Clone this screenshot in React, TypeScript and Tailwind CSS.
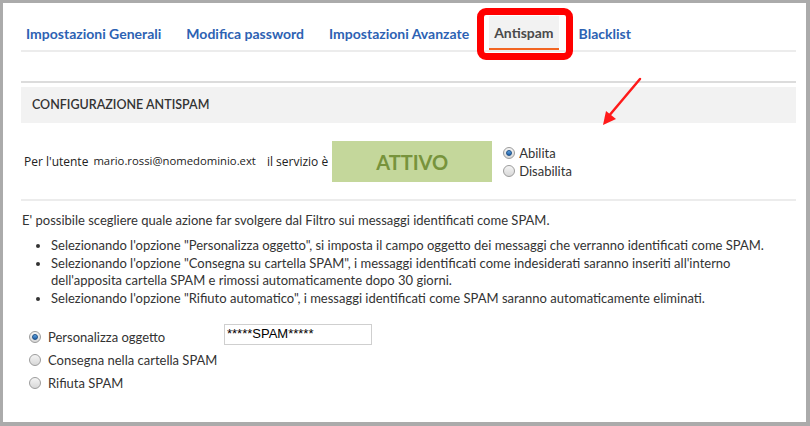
import React from "react"

const tabs = ["Impostazioni Generali", "Modifica password", "Impostazioni Avanzate", "Antispam", "Blacklist"]

function Radio({ checked }: { checked?: boolean }) {
  return (
    <span className="relative inline-flex h-[12px] w-[12px] shrink-0 items-center justify-center rounded-full border border-[#9c9c9c] bg-gradient-to-b from-[#f4f4f4] to-[#d8d8d8]">
      {checked && (
        <span className="h-[6px] w-[6px] rounded-full border border-[#1c4f86] bg-gradient-to-b from-[#5fa3e0] to-[#1e5fa8]" />
      )}
    </span>
  )
}

export default function App() {
  return (
    <div className="relative box-border h-[426px] w-[810px] border-t-[3px] border-l-[3px] border-r-[4px] border-b-[4px] border-[#ababab] bg-white font-['Lato',sans-serif] text-[#333]">
      <div className="pl-[18px] pr-[10px]">
        {/* tabs */}
        <div className="mt-[13px] flex gap-[15px] border-b-2 border-[#ececec]">
          {tabs.map((t) => (
            <div
              key={t}
              className={
                t === "Antispam"
                  ? "flex h-[34px] items-center border-b-2 border-[#f26522] bg-[#f2f2f2] px-[5px] text-[14px] font-bold text-[#4a4a4a]"
                  : "flex h-[34px] items-center px-[5px] text-[14px] font-bold text-[#2d62b3]"
              }
            >
              {t}
            </div>
          ))}
        </div>

        <div className="mt-[29px] h-[2px] bg-[#dcdcdc]" />
        <div className="mt-[4px] flex h-[36px] items-center bg-[#f2f2f2] px-[11px] text-[12.5px] font-semibold text-[#333]">
          CONFIGURAZIONE ANTISPAM
        </div>

        {/* stato servizio */}
        <div className="mt-[18px] flex items-center pl-[3px] font-['Open_Sans',sans-serif] text-[12px] text-[#222]">
          <span>Per l'utente</span>
          <span className="ml-[5px] text-[11.3px]">mario.rossi@nomedominio.ext</span>
          <span className="ml-[11px]">il servizio è</span>
          <div className="ml-[4px] flex h-[41px] w-[160px] items-center justify-center bg-[#c4d79b] font-['Lato',sans-serif] text-[20px] font-bold text-[#77933c]">
            ATTIVO
          </div>
          <div className="ml-[11px] flex flex-col gap-[4px] font-['Lato',sans-serif] text-[13px] leading-[14px] text-[#333]">
            <label className="flex items-center gap-[4px]">
              <Radio checked />
              Abilita
            </label>
            <label className="flex items-center gap-[4px]">
              <Radio />
              Disabilita
            </label>
          </div>
        </div>

        <div className="mt-[17px] h-[2px] bg-[#ececec]" />

        <p className="mt-[11px] pl-[1px] text-[13px] leading-[17px] text-[#333]">
          E' possibile scegliere quale azione far svolgere dal Filtro sui messaggi identificati come SPAM.
        </p>
        <ul className="mt-[8px] list-disc pl-[30px] text-[13px] leading-[17.5px] text-[#333]">
          <li>Selezionando l'opzione "Personalizza oggetto", si imposta il campo oggetto dei messaggi che verranno identificati come SPAM.</li>
          <li>
            Selezionando l'opzione "Consegna su cartella SPAM", i messaggi identificati come indesiderati saranno inseriti all'interno
            <br />
            dell'apposita cartella SPAM e rimossi automaticamente dopo 30 giorni.
          </li>
          <li>Selezionando l'opzione "Rifiuto automatico", i messaggi identificati come SPAM saranno automaticamente eliminati.</li>
        </ul>

        {/* opzioni */}
        <div className="mt-[20px] flex flex-col gap-[7px] pl-[8px] text-[13px] leading-[16px] text-[#333]">
          <div className="flex items-center">
            <label className="flex w-[195px] items-center gap-[7px] pt-[2px]">
              <Radio checked />
              Personalizza oggetto
            </label>
            <div className="-mt-[4px] flex h-[21px] w-[148px] items-center border border-[#cfcfcf] pl-[2px] font-['Liberation_Sans',sans-serif] text-[13px] text-black">
              *****SPAM*****
            </div>
          </div>
          <label className="flex items-center gap-[7px]">
            <Radio />
            Consegna nella cartella SPAM
          </label>
          <label className="flex items-center gap-[7px]">
            <Radio />
            Rifiuta SPAM
          </label>
        </div>
      </div>

      {/* evidenziazione */}
      <div className="absolute left-[474px] top-[5px] h-[52px] w-[96px] rounded-[9px] border-[7px] border-[#ff0000]" />
      <svg className="absolute left-[590px] top-[70px]" width="60" height="60" viewBox="0 0 60 60">
        <line x1="47" y1="6" x2="15" y2="44" stroke="#ff1a1a" strokeWidth="2.5" strokeLinecap="round" />
        <polygon points="10,52 13,38 23,46" fill="#ff1a1a" />
      </svg>
    </div>
  )
}
